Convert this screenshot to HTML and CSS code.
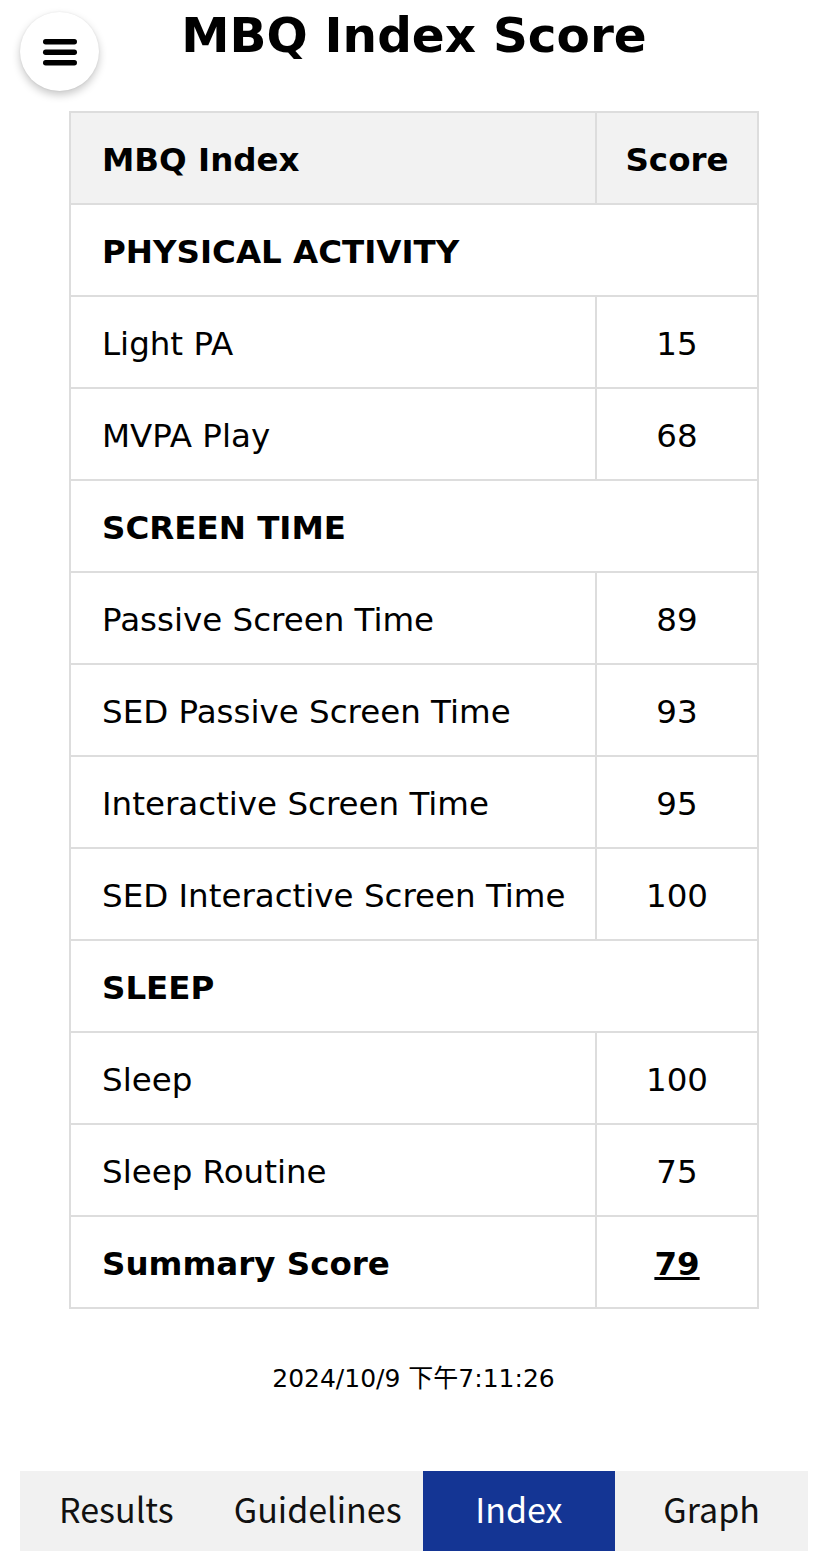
FILE: index.html
```html
<!DOCTYPE html>
<html>
<head>
<meta charset="utf-8">
<link rel="stylesheet" href="styles.css">
</head>
<body>
<header class="top">
  <button class="menu-btn" aria-label="menu">
    <svg width="36" height="28" viewBox="0 0 36 28"><rect x="1" y="1" width="34" height="5.5" rx="2.7" fill="#000"/><rect x="1" y="11.5" width="34" height="5.5" rx="2.7" fill="#000"/><rect x="1" y="22" width="34" height="5.5" rx="2.7" fill="#000"/></svg>
  </button>
  <h1 class="title">MBQ Index Score</h1>
</header>
<main class="content">
  <table class="score-table">
    <thead>
      <tr><th class="c-name">MBQ Index</th><th class="c-score">Score</th></tr>
    </thead>
    <tbody>
      <tr><td class="section" colspan="2">PHYSICAL ACTIVITY</td></tr>
      <tr><td>Light PA</td><td class="num">15</td></tr>
      <tr><td>MVPA Play</td><td class="num">68</td></tr>
      <tr><td class="section" colspan="2">SCREEN TIME</td></tr>
      <tr><td>Passive Screen Time</td><td class="num">89</td></tr>
      <tr><td>SED Passive Screen Time</td><td class="num">93</td></tr>
      <tr><td>Interactive Screen Time</td><td class="num">95</td></tr>
      <tr><td>SED Interactive Screen Time</td><td class="num">100</td></tr>
      <tr><td class="section" colspan="2">SLEEP</td></tr>
      <tr><td>Sleep</td><td class="num">100</td></tr>
      <tr><td>Sleep Routine</td><td class="num">75</td></tr>
      <tr class="summary"><td>Summary Score</td><td class="num"><u>79</u></td></tr>
    </tbody>
  </table>
  <p class="stamp">2024/10/9 下午7:11:26</p>
</main>
<nav class="tabs">
  <a class="tab">Results</a>
  <a class="tab">Guidelines</a>
  <a class="tab active">Index</a>
  <a class="tab">Graph</a>
</nav>
</body>
</html>
```

FILE: styles.css
```css
html, body {
  margin: 0;
  padding: 0;
  background: #fff;
}
body {
  font-family: "DejaVu Sans", Verdana, "Noto Sans CJK TC", sans-serif;
  color: #000;
  width: 822px;
}
.top {
  position: relative;
  height: 111px;
}
.menu-btn {
  position: absolute;
  left: 20px;
  top: 12px;
  width: 79px;
  height: 79px;
  border-radius: 50%;
  border: none;
  background: #fff;
  box-shadow: 0 4px 8px rgba(0,0,0,0.22), 0 0 2px rgba(0,0,0,0.08);
  display: flex;
  align-items: center;
  justify-content: center;
  padding: 0;
}
.title {
  margin: 0;
  text-align: center;
  font-size: 48.5px;
  font-weight: bold;
  line-height: 70px;
  padding-left: 6px;
}
.content {
  display: flex;
  flex-direction: column;
  align-items: flex-start;
}
.score-table {
  width: 690px;
  margin-left: 69px;
  border-collapse: collapse;
  border: 2px solid #ddd;
  font-size: 32.5px;
}
.score-table th,
.score-table td {
  border: 2px solid #ddd;
  height: 87px;
  padding: 3px 0 0 31px;
  text-align: left;
  box-sizing: content-box;
}
.score-table th {
  background: #f2f2f2;
  font-weight: bold;
}
.score-table .c-score {
  width: 160px;
  padding: 3px 0 0 0;
  text-align: center;
}
.score-table td.num {
  padding: 3px 0 0 0;
  text-align: center;
}
.score-table td.section {
  font-weight: bold;
}
.summary td {
  font-weight: bold;
}
.stamp {
  align-self: center;
  margin: 55px 0 0 5px;
  font-size: 25px;
  line-height: 30px;
  text-align: center;
}
.tabs {
  display: flex;
  margin: 77px 14px 0 20px;
  height: 80px;
  background: #f1f1f1;
}
.tab {
  flex: 1 1 0;
  display: flex;
  align-items: center;
  justify-content: center;
  padding: 0 21px 5px 21px;
  font-family: "Noto Sans CJK TC", "Noto Sans", sans-serif;
  font-size: 34px;
  color: #111;
  white-space: nowrap;
}
.tab.active {
  background: #143594;
  color: #fff;
}
```
